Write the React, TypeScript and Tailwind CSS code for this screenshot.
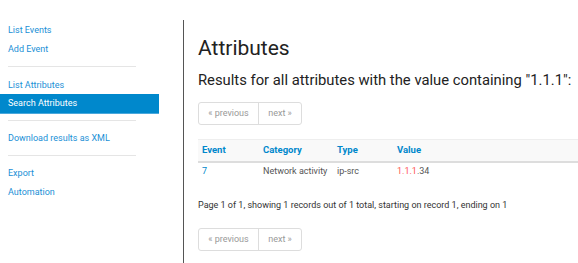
import React from "react";

const linkStyle = `block h-[19px] leading-[19px] pt-[1px] px-[8px] text-[9px] text-[#1a8fd6]`;
const dividerStyle = `h-px bg-[#e5e5e5] ml-[8px] w-[128px]`;

const sideLinks1 = ["List Events", "Add Event"];
const sideLinks2 = ["Export", "Automation"];

function Pager() {
  return (
    <div className="flex w-fit rounded-[3px] border border-[#ddd] text-[9px] text-[#999]">
      <span className="w-[60px] h-[21px] leading-[21px] text-center border-r border-[#ddd]">« previous</span>
      <span className="w-[42px] h-[21px] leading-[21px] text-center">next »</span>
    </div>
  );
}

export default function App() {
  return (
    <div className="flex min-h-[263px] w-[578px] overflow-hidden bg-white font-['Roboto',sans-serif]">
      <div className="w-[159px] shrink-0 pt-[20px]">
        {sideLinks1.map(x => (
          <a key={x} className={linkStyle}>{x}</a>
        ))}
        <div className={`${dividerStyle} mt-[8px] mb-[8px]`} />
        <a className={linkStyle}>List Attributes</a>
        <a className="block h-[20px] leading-[19px] px-[8px] text-[9px] text-white bg-[#0088cc] border-b border-[#4aa8dc]">
          Search Attributes
        </a>
        <div className={`${dividerStyle} mt-[6px] mb-[7px]`} />
        <a className={linkStyle}>Download results as XML</a>
        <div className={`${dividerStyle} mt-[8px] mb-[7px]`} />
        {sideLinks2.map(x => (
          <a key={x} className={linkStyle}>{x}</a>
        ))}
      </div>
      <div className="ml-[24px] mt-[20px] flex-1 min-w-0 border-l border-[#555] pl-[14px] overflow-hidden">
        <h2 className="mt-[16px] text-[21px] leading-[25px] text-[#222]">Attributes</h2>
        <h4 className="mt-[9px] text-[14.8px] leading-[20px] text-[#222] whitespace-nowrap">
          Results for all attributes with the value containing "1.1.1":
        </h4>
        <div className="mt-[12px]">
          <Pager />
        </div>
        <table className="mt-[14px] w-[600px] text-[9px] border-collapse">
          <thead>
            <tr className="bg-[#f9f9f9] border-t border-[#eee] border-b-2 border-b-[#ddd]">
              <th className="w-[61px] h-[22px] px-[4px] text-left text-[9.5px] font-bold text-[#0088cc]">Event</th>
              <th className="w-[74px] px-[4px] text-left text-[9.5px] font-bold text-[#0088cc]">Category</th>
              <th className="w-[60px] px-[4px] text-left text-[9.5px] font-bold text-[#0088cc]">Type</th>
              <th className="px-[4px] text-left text-[9.5px] font-bold text-[#0088cc]">Value</th>
            </tr>
          </thead>
          <tbody>
            <tr className="h-[20px] text-[#555]">
              <td className="px-[4px] text-[#0088cc]">7</td>
              <td className="px-[4px] whitespace-nowrap">Network activity</td>
              <td className="px-[4px]">ip-src</td>
              <td className="px-[4px]">
                <span className="text-[#f55]">1.1.1</span>.34
              </td>
            </tr>
          </tbody>
        </table>
        <p className="mt-[14px] text-[9px] leading-[18px] text-[#333] whitespace-nowrap">
          Page 1 of 1, showing 1 records out of 1 total, starting on record 1, ending on 1
        </p>
        <div className="mt-[14px]">
          <Pager />
        </div>
      </div>
    </div>
  );
}
